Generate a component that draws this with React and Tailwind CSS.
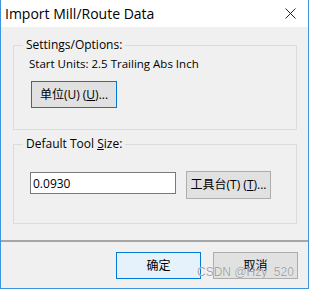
export default function App() {
  const font = { fontFamily: '"Open Sans", "Noto Sans CJK SC", sans-serif' };

  return (
    <div
      className="w-[309px] h-[289px] flex flex-col border-x border-b border-[#3f94e0] bg-[#f0f0f0] text-[12px] text-black relative overflow-hidden"
      style={font}
    >
      <div className="h-[27px] bg-white flex items-center justify-between pl-[4px] pr-[12px] shrink-0">
        <span className="text-[14px] leading-none">Import Mill/Route Data</span>
        <svg width="11" height="11" viewBox="0 0 11 11" className="text-[#222]">
          <path d="M0.5 0.5 L10.5 10.5 M10.5 0.5 L0.5 10.5" stroke="currentColor" strokeWidth="1" />
        </svg>
      </div>

      <div className="flex-1 px-[12px] pr-[11px]">
        <fieldset className="mt-[10px] h-[93px] border border-[#dcdcdc] pl-[15px]">
          <legend className="ml-[-6px] px-[3px] leading-[16px]">Settings/Options:</legend>
          <div className="mt-[3px] leading-[16px] text-[11.5px]">Start Units: 2.5 Trailing Abs Inch</div>
          <button className="mt-[9px] ml-[2px] w-[86px] h-[27px] bg-[#e1e1e1] border border-[#0078d7] leading-none">
            单位(U) (<span className="underline">U</span>)...
          </button>
        </fieldset>

        <fieldset className="mt-[6px] h-[88px] border border-[#dcdcdc] pl-[16px]">
          <legend className="ml-[-7px] px-[3px] leading-[16px]">
            Default Tool <span className="underline">S</span>ize:
          </legend>
          <div className="mt-[19px] flex items-start gap-[10px]">
            <input
              readOnly
              value="0.0930"
              className="mt-[1px] w-[146px] h-[22px] bg-white border border-[#7a7a7a] px-[2px] text-[12px] outline-none"
              style={font}
            />
            <button className="w-[85px] h-[28px] bg-[#e1e1e1] border border-[#adadad] leading-none">
              工具台(T) (<span className="underline">T</span>)...
            </button>
          </div>
        </fieldset>
      </div>

      <div className="h-[48px] shrink-0 border-t-2 border-[#a6a6a6] flex justify-end gap-[12px] pt-[10px] pr-[10px]">
        <button className="w-[85px] h-[27px] bg-[#e5f1fb] border border-[#0078d7] leading-none">确定</button>
        <button className="w-[85px] h-[27px] bg-[#e1e1e1] border border-[#adadad] leading-none">取消</button>
      </div>

      <span
        className="absolute left-[196px] top-[264px] whitespace-nowrap text-[12px] leading-[16px] text-[#9a9a9a]/90 pointer-events-none"
        style={{ fontFamily: '"Liberation Sans", sans-serif', textShadow: "0 0 1px #fff" }}
      >
        CSDN @Hzy_520
      </span>
    </div>
  );
}
